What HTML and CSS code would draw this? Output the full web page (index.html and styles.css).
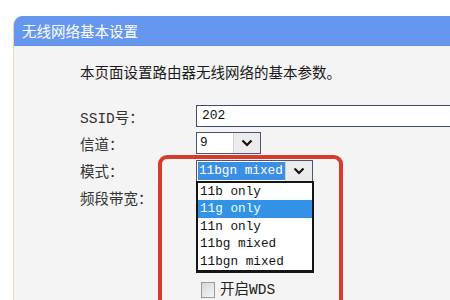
FILE: index.html
```html
<!DOCTYPE html>
<html lang="zh-CN">
<head>
    <meta charset="UTF-8">
    <meta name="viewport" content="width=device-width, initial-scale=1.0">
    <title>无线网络基本设置</title>
    <link rel="stylesheet" href="styles.css">
</head>
<body>
    <div class="panel">
        <div class="panel-title">无线网络基本设置</div>
        <div class="panel-body">
            <p class="intro">本页面设置路由器无线网络的基本参数。</p>

            <div class="form-row row-ssid">
                <label>SSID号：</label>
                <div class="text-box">202</div>
            </div>

            <div class="form-row row-channel">
                <label>信道：</label>
                <div class="select select-channel">
                    <span class="select-value">9</span>
                    <span class="select-arrow">
                        <svg width="12" height="8" viewBox="0 0 12 8"><polyline points="1.5,1.5 6,6 10.5,1.5" fill="none" stroke="#111" stroke-width="2.2"/></svg>
                    </span>
                </div>
            </div>

            <div class="form-row row-mode">
                <label>模式：</label>
                <div class="select select-mode">
                    <span class="select-value selected">11bgn mixed</span>
                    <span class="select-arrow">
                        <svg width="12" height="8" viewBox="0 0 12 8"><polyline points="1.5,1.5 6,6 10.5,1.5" fill="none" stroke="#111" stroke-width="2.2"/></svg>
                    </span>
                    <ul class="dropdown">
                        <li>11b only</li>
                        <li class="active">11g only</li>
                        <li>11n only</li>
                        <li>11bg mixed</li>
                        <li>11bgn mixed</li>
                    </ul>
                </div>
            </div>

            <div class="form-row row-band">
                <label>频段带宽：</label>
            </div>

            <div class="form-row row-wds">
                <label></label>
                <span class="checkbox"></span>
                <span class="check-label">开启WDS</span>
            </div>
        </div>
    </div>

    <!-- marca roja -->
    <div class="highlight"></div>
</body>
</html>
```

FILE: styles.css
```css
html {
    overflow: hidden;
}

body {
    position: relative;
    margin: 0;
    padding: 0;
    width: 450px;
    height: 300px;
    overflow: hidden;
    background-color: #fff;
    font-family: "Liberation Mono", "Noto Sans CJK SC", monospace;
    font-size: 14.5px;
    color: #222;
}

.panel {
    margin-left: 13px;
    margin-top: 16px;
    height: 284px;
    border-left: 1px solid #ead6b8;
    border-top-left-radius: 9px;
    overflow: hidden;
    background-color: #f4f4f4;
}

.panel-title {
    height: 29px;
    line-height: 29px;
    padding-left: 8px;
    background-color: #6597ee;
    color: #fff;
    font-family: "Noto Sans CJK SC", sans-serif;
    border-bottom: 1px solid #5e8fe0;
}

.panel-body {
    padding-left: 66px;
    padding-top: 16px;
}

.intro {
    margin: 0 0 23px 0;
    height: 20px;
    line-height: 20px;
    font-family: "Noto Sans CJK SC", sans-serif;
    color: #1a1a1a;
}

.form-row {
    display: flex;
    align-items: center;
}

.form-row label {
    width: 116px;
    flex-shrink: 0;
    color: #333;
}

.row-ssid {
    height: 22px;
    margin-bottom: 5px;
}

.row-channel {
    height: 22px;
    margin-bottom: 6px;
}

.row-mode {
    height: 21px;
    margin-bottom: 6px;
}

.row-band {
    height: 21px;
    margin-bottom: 74px;
}

.row-wds {
    height: 16px;
}

.text-box {
    flex: 1;
    height: 20px;
    line-height: 20px;
    padding-left: 5px;
    background-color: #fff;
    border: 1px solid #3e4a6a;
    border-right: none;
    font-size: 13px;
    color: #111;
}

.select {
    position: relative;
    display: flex;
    height: 20px;
    border: 1px solid #4a5474;
    background-color: #fff;
    font-size: 12.7px;
    white-space: nowrap;
}

.select-channel {
    width: 63px;
}

.select-mode {
    width: 115px;
}

.select-value {
    flex: 1;
    min-width: 0;
    overflow: hidden;
    line-height: 20px;
    padding-left: 3px;
    color: #111;
}

.select-value.selected {
    margin: 1px 0 1px 1px;
    padding-left: 1px;
    line-height: 18px;
    background-color: #3a8fe3;
    color: #fff;
}

.select-arrow {
    width: 26px;
    flex-shrink: 0;
    display: flex;
    align-items: center;
    justify-content: center;
    background-color: #ececec;
    border-left: 1px solid #d0d0d0;
}

.dropdown {
    position: absolute;
    left: -1px;
    top: 20px;
    width: 114px;
    margin: 0;
    padding: 0;
    list-style: none;
    background-color: #fff;
    border: 2px solid #151515;
    border-bottom-width: 3px;
    z-index: 2;
}

.dropdown li {
    height: 17.5px;
    line-height: 18.5px;
    padding-left: 2px;
    font-size: 12.7px;
    color: #111;
}

.dropdown li.active {
    background-color: #3492e6;
    color: #eaffff;
}

.checkbox {
    width: 12px;
    height: 14px;
    margin-left: 5px;
    border: 1px solid #9a9a9a;
    background: linear-gradient(135deg, #d6d6d6, #f6f6f6);
}

.check-label {
    margin-left: 5px;
    line-height: 16px;
    color: #222;
}

.highlight {
    position: absolute;
    left: 158px;
    top: 155px;
    width: 177px;
    height: 141px;
    border: 4px solid #d83a2c;
    border-bottom: none;
    border-radius: 9px 9px 0 0;
    z-index: 3;
}
```
